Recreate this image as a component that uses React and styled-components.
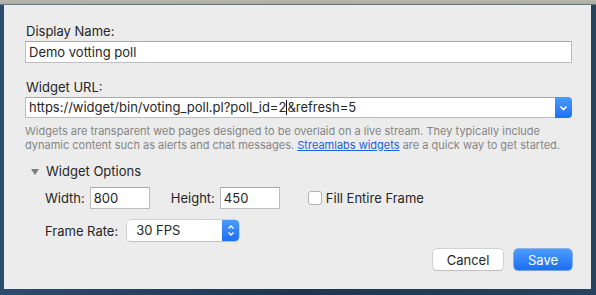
import React from "react";
import styled, { createGlobalStyle } from "styled-components";

const GlobalStyle = createGlobalStyle`
  html, body {
    margin: 0;
    padding: 0;
    width: 596px;
    height: 295px;
    overflow: hidden;
  }
  body {
    font-family: Inter, "Liberation Sans", sans-serif;
    background:
      linear-gradient(180deg, #b9b7ad 0px, #a9aaa4 4px, transparent 5px),
      linear-gradient(90deg, #2c4b6e 0px, #1d3550 50%, #27415e 100%);
  }
`;

const Desktop = styled.div`
  padding: 5px 5px 6px 4px;
  box-sizing: border-box;
  height: 295px;
`;

const Dialog = styled.div`
  background: #ececec;
  height: 284px;
  box-sizing: border-box;
  padding: 18px 19px 0 21px;
  display: flex;
  flex-direction: column;
  color: #262626;
  font-size: 13px;
  line-height: 16px;
`;

const Label = styled.div`
  padding-left: 1px;
  margin-top: ${({ $top }) => $top || 0}px;
  margin-bottom: 2px;
`;

const TextInput = styled.div`
  height: 22px;
  box-sizing: border-box;
  background: #fff;
  border: 1px solid #bdbdbd;
  border-top-color: #a9a9a9;
  padding: 2px 3px;
  white-space: nowrap;
  overflow: hidden;
`;

const Combo = styled.div`
  display: flex;
  height: 21px;
  box-sizing: border-box;
`;

const ComboField = styled.div`
  flex: 1;
  background: #fff;
  border: 1px solid #bdbdbd;
  border-top-color: #a9a9a9;
  border-right: none;
  padding: 1px 0 0 3px;
  white-space: nowrap;
`;

const Caret = styled.span`
  display: inline-block;
  width: 1px;
  height: 15px;
  background: #111;
  vertical-align: -3px;
`;

const BlueCap = styled.div`
  width: 17px;
  background: linear-gradient(180deg, #4b9bfb, #1e6ff5);
  border-radius: 0 4px 4px 0;
  display: flex;
  align-items: center;
  justify-content: center;
`;

const Help = styled.p`
  margin: 6px 0 0;
  font-size: 11px;
  line-height: 14px;
  color: #858585;
`;

const Link = styled.a`
  color: #1a64d6;
  text-decoration: underline;
`;

const Disclosure = styled.div`
  margin-top: 11px;
  display: flex;
  align-items: center;
  gap: 7px;
  padding-left: 6px;
`;

const Triangle = styled.span`
  width: 0;
  height: 0;
  border-left: 4px solid transparent;
  border-right: 4px solid transparent;
  border-top: 6px solid #7a7a7a;
  margin-top: 1px;
`;

const Options = styled.div`
  padding-left: 20px;
  display: flex;
  flex-direction: column;
  gap: 11px;
  margin-top: 8px;
`;

const Row = styled.div`
  display: flex;
  align-items: center;
`;

const SmallInput = styled(TextInput)`
  width: 60px;
  margin-left: 5px;
  margin-right: ${({ $after }) => $after || 0}px;
`;

const Check = styled.span`
  width: 14px;
  height: 14px;
  box-sizing: border-box;
  background: #fff;
  border: 1px solid #b3b3b3;
  border-radius: 3px;
  margin-right: 4px;
`;

const Popup = styled.div`
  display: flex;
  margin-left: 9px;
  width: 112px;
  height: 21px;
  box-sizing: border-box;
  border-radius: 4px;
  box-shadow: 0 0 0 0.5px #b8b8b8, 0 1px 1px rgba(0, 0, 0, 0.15);
  overflow: hidden;
`;

const PopupValue = styled.div`
  flex: 1;
  background: #fff;
  padding: 2px 0 0 9px;
`;

const Footer = styled.div`
  display: flex;
  justify-content: flex-end;
  gap: 11px;
  margin-top: 8px;
`;

const Button = styled.button`
  font: inherit;
  height: 21px;
  width: ${({ $w }) => $w}px;
  border-radius: 4px;
  padding: 0;
  border: none;
  color: ${({ $primary }) => ($primary ? "#fff" : "#262626")};
  background: ${({ $primary }) =>
    $primary ? "linear-gradient(180deg, #4e9cfa, #1b6ef6)" : "#fff"};
  box-shadow: ${({ $primary }) =>
    $primary
      ? "0 0 0 0.5px #2f77e6, 0 1px 1px rgba(0,0,0,0.15)"
      : "0 0 0 0.5px #b8b8b8, 0 1px 1px rgba(0,0,0,0.15)"};
`;

const ChevronDown = () => (
  <svg width="9" height="6" viewBox="0 0 9 6">
    <path d="M1.5 1.5 L4.5 4.5 L7.5 1.5" fill="none" stroke="#fff" strokeWidth="1.6" />
  </svg>
);

const UpDown = () => (
  <svg width="8" height="13" viewBox="0 0 8 13">
    <path d="M1.5 4.5 L4 2 L6.5 4.5 M1.5 8.5 L4 11 L6.5 8.5" fill="none" stroke="#fff" strokeWidth="1.4" />
  </svg>
);

export default function App() {
  return (
    <>
      <GlobalStyle />
      <Desktop>
        <Dialog>
          <Label>Display Name:</Label>
          <TextInput>Demo votting poll</TextInput>
          <Label $top={16}>Widget URL:</Label>
          <Combo>
            <ComboField>
              https://widget/bin/voting_poll.pl?poll_id=2<Caret />&amp;refresh=5
            </ComboField>
            <BlueCap>
              <ChevronDown />
            </BlueCap>
          </Combo>
          <Help>
            Widgets are transparent web pages designed to be overlaid on a live stream. They typically include
            dynamic content such as alerts and chat messages. <Link>Streamlabs widgets</Link> are a quick way to get
            started.
          </Help>
          <Disclosure>
            <Triangle />
            Widget Options
          </Disclosure>
          <Options>
            <Row>
              Width:
              <SmallInput $after={21}>800</SmallInput>
              Height:
              <SmallInput $after={28}>450</SmallInput>
              <Check />
              Fill Entire Frame
            </Row>
            <Row>
              Frame Rate:
              <Popup>
                <PopupValue>30 FPS</PopupValue>
                <BlueCap>
                  <UpDown />
                </BlueCap>
              </Popup>
            </Row>
          </Options>
          <Footer>
            <Button $w={70}>Cancel</Button>
            <Button $w={58} $primary>
              Save
            </Button>
          </Footer>
        </Dialog>
      </Desktop>
    </>
  );
}
